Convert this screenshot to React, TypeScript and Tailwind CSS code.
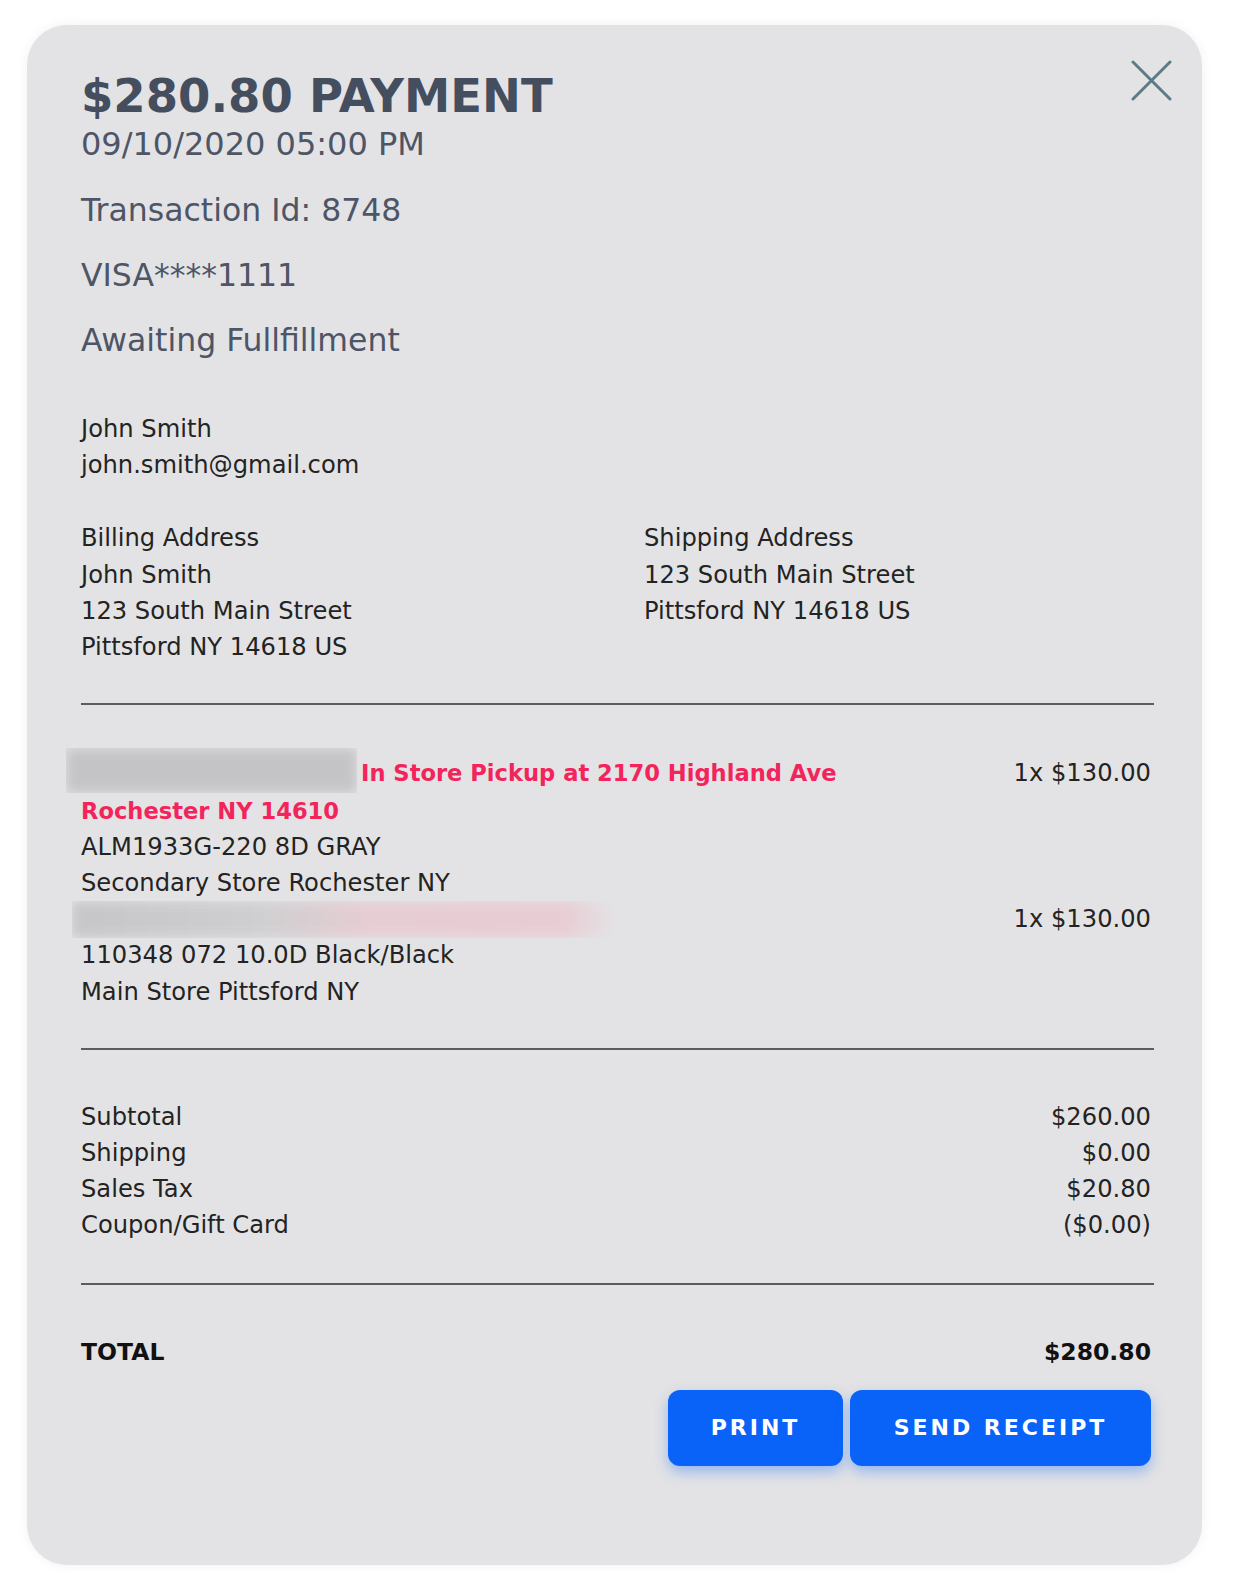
const font = { fontFamily: "'DejaVu Sans', Verdana, sans-serif" };

function Blur({ className }: { className: string }) {
  return (
    <span className={`inline-block overflow-hidden align-middle ${className}`}>
      <span className="block h-full w-full blur-[6px] bg-[#c4c4c6]" />
    </span>
  );
}

export default function App() {
  return (
    <div className="h-[1578px] w-full overflow-hidden bg-white pl-[27px] pt-[25px]" style={font}>
      <div className="relative w-[1175px] h-[1540px] rounded-[40px] bg-[#e3e3e5] pl-[54px] pr-[48px] pt-[43px] shadow-[0_0_12px_rgba(0,0,0,0.06)]">
        {/* Close */}
        <button className="absolute right-[30px] top-[35px]">
          <svg width="41" height="41" viewBox="0 0 41 41" fill="none" stroke="#5b7b86" strokeWidth="3" strokeLinecap="round">
            <path d="M2 2 39 39M39 2 2 39" />
          </svg>
        </button>

        {/* Header */}
        <h1 className="text-[46.5px] leading-[56px] font-bold text-[#454e5f]">$280.80 PAYMENT</h1>
        <p className="text-[32px] leading-[40px] text-[#4d5566]">09/10/2020 05:00 PM</p>
        <div className="mt-[26px] space-y-[25px] text-[31.5px] leading-[40px] text-[#4d5566]">
          <p>Transaction Id: 8748</p>
          <p>VISA****1111</p>
          <p>Awaiting Fullfillment</p>
        </div>

        <div className="text-[24.2px] leading-[36.2px] text-[#232323]">
          {/* Customer */}
          <div className="mt-[51px]">
            <p>John Smith</p>
            <p>john.smith@gmail.com</p>
          </div>

          {/* Addresses */}
          <div className="mt-[37px] grid grid-cols-[563px_1fr]">
            <div>
              <p>Billing Address</p>
              <p>John Smith</p>
              <p>123 South Main Street</p>
              <p>Pittsford NY 14618 US</p>
            </div>
            <div>
              <p>Shipping Address</p>
              <p>123 South Main Street</p>
              <p>Pittsford NY 14618 US</p>
            </div>
          </div>

          <hr className="mt-[38px] border-t-2 border-[#5c5c5e]" />

          {/* Items */}
          <div className="mt-[50px] pr-[3px]">
            <div className="flex justify-between">
              <div>
                <p>
                  <Blur className="-ml-[15px] mr-[4px] w-[291px] h-[45px] -mt-[8px]" />
                  <span className="text-[22.6px] font-bold text-[#f2245b]">In Store Pickup at 2170 Highland Ave</span>
                  <br />
                  <span className="text-[22.6px] font-bold text-[#f2245b]">Rochester NY 14610</span>
                </p>
                <p>ALM1933G-220 8D GRAY</p>
                <p>Secondary Store Rochester NY</p>
              </div>
              <p className="text-right">1x $130.00</p>
            </div>
            <div className="flex justify-between">
              <div>
                <p className="h-[36px]">
                  <span className="-ml-[9px] inline-block h-[37px] w-[545px] overflow-hidden align-top">
                    <span className="block h-full w-full blur-[6px] bg-[linear-gradient(90deg,#c6c6c8_0%,#cfcfd1_35%,#e6cdd3_55%,#e8ccd3_90%,#e3e3e5_100%)]" />
                  </span>
                </p>
                <p>110348 072 10.0D Black/Black</p>
                <p>Main Store Pittsford NY</p>
              </div>
              <p className="text-right">1x $130.00</p>
            </div>
          </div>

          <hr className="mt-[38px] border-t-2 border-[#5c5c5e]" />

          {/* Totals */}
          <div className="mt-[49px] pr-[3px]">
            {[
              ["Subtotal", "$260.00"],
              ["Shipping", "$0.00"],
              ["Sales Tax", "$20.80"],
              ["Coupon/Gift Card", "($0.00)"],
            ].map(([label, value]) => (
              <div key={label} className="flex justify-between">
                <span>{label}</span>
                <span>{value}</span>
              </div>
            ))}
          </div>

          <hr className="mt-[39px] border-t-2 border-[#5c5c5e]" />

          <div className="mt-[49px] pr-[3px] flex justify-between text-[23.5px] font-bold text-[#111]">
            <span>TOTAL</span>
            <span>$280.80</span>
          </div>
        </div>

        {/* Actions */}
        <div className="mt-[20px] flex justify-end gap-[7px] pr-[3px]">
          <button className="h-[76px] w-[175px] rounded-[12px] bg-[#0a63f8] text-[22px] font-bold tracking-[3px] text-white shadow-[0_6px_14px_rgba(10,99,248,0.35)]">
            PRINT
          </button>
          <button className="h-[76px] w-[301px] rounded-[12px] bg-[#0a63f8] text-[22px] font-bold tracking-[3px] text-white shadow-[0_6px_14px_rgba(10,99,248,0.35)]">
            SEND RECEIPT
          </button>
        </div>
      </div>
    </div>
  );
}
